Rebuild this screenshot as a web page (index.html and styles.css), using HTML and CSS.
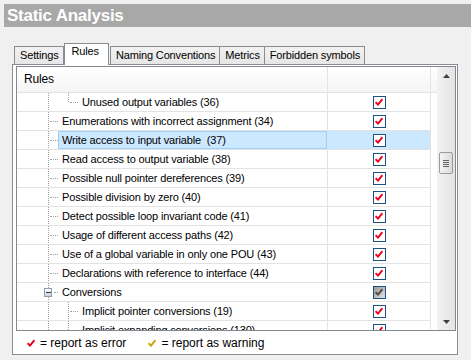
FILE: index.html
```html
<!DOCTYPE html>
<html lang="en">
<head>
    <meta charset="UTF-8">
    <title>Static Analysis</title>
    <link rel="stylesheet" href="styles.css">
</head>
<body>
    <svg class="defs" width="0" height="0">
        <symbol id="tick" viewBox="0 0 8 8">
            <path d="M0.6 4.2 L3 6.6 L7.4 1.2" fill="none" stroke-width="1.9" stroke-linejoin="miter" stroke-linecap="butt"/>
        </symbol>
    </svg>

    <div class="title">Static Analysis</div>

    <div class="tabs">
        <div class="tab">Settings</div>
        <div class="tab active">Rules</div>
        <div class="tab">Naming Conventions</div>
        <div class="tab">Metrics</div>
        <div class="tab">Forbidden symbols</div>
    </div>

    <div class="panel">
        <div class="grid">
            <div class="view">
                <div class="head">
                    <div class="head-name">Rules</div>
                    <div class="head-check"></div>
                </div>
                <div class="rows">
                    <div class="row">
                        <div class="name"><span class="g"></span><span class="g l"></span><span class="label">Unused output variables (36)</span></div>
                        <div class="check"><span class="cb"><svg><use href="#tick"/></svg></span></div>
                    </div>
                    <div class="row">
                        <div class="name"><span class="g t"></span><span class="label">Enumerations with incorrect assignment (34)</span></div>
                        <div class="check"><span class="cb"><svg><use href="#tick"/></svg></span></div>
                    </div>
                    <div class="row selected">
                        <div class="name"><span class="g t"></span><span class="label">Write access to input variable&nbsp; (37)</span></div>
                        <div class="check"><span class="cb"><svg><use href="#tick"/></svg></span></div>
                    </div>
                    <div class="row">
                        <div class="name"><span class="g t"></span><span class="label">Read access to output variable (38)</span></div>
                        <div class="check"><span class="cb"><svg><use href="#tick"/></svg></span></div>
                    </div>
                    <div class="row">
                        <div class="name"><span class="g t"></span><span class="label">Possible null pointer dereferences (39)</span></div>
                        <div class="check"><span class="cb"><svg><use href="#tick"/></svg></span></div>
                    </div>
                    <div class="row">
                        <div class="name"><span class="g t"></span><span class="label">Possible division by zero (40)</span></div>
                        <div class="check"><span class="cb"><svg><use href="#tick"/></svg></span></div>
                    </div>
                    <div class="row">
                        <div class="name"><span class="g t"></span><span class="label">Detect possible loop invariant code (41)</span></div>
                        <div class="check"><span class="cb"><svg><use href="#tick"/></svg></span></div>
                    </div>
                    <div class="row">
                        <div class="name"><span class="g t"></span><span class="label">Usage of different access paths (42)</span></div>
                        <div class="check"><span class="cb"><svg><use href="#tick"/></svg></span></div>
                    </div>
                    <div class="row">
                        <div class="name"><span class="g t"></span><span class="label">Use of a global variable in only one POU (43)</span></div>
                        <div class="check"><span class="cb"><svg><use href="#tick"/></svg></span></div>
                    </div>
                    <div class="row">
                        <div class="name"><span class="g t"></span><span class="label">Declarations with reference to interface (44)</span></div>
                        <div class="check"><span class="cb"><svg><use href="#tick"/></svg></span></div>
                    </div>
                    <div class="row">
                        <div class="name"><span class="g box"><span class="minus"></span></span><span class="label">Conversions</span></div>
                        <div class="check"><span class="cb mixed"><svg><use href="#tick"/></svg></span></div>
                    </div>
                    <div class="row">
                        <div class="name"><span class="g"></span><span class="g t"></span><span class="label">Implicit pointer conversions (19)</span></div>
                        <div class="check"><span class="cb"><svg><use href="#tick"/></svg></span></div>
                    </div>
                    <div class="row">
                        <div class="name"><span class="g"></span><span class="g t"></span><span class="label">Implicit expanding conversions (130)</span></div>
                        <div class="check"><span class="cb"><svg><use href="#tick"/></svg></span></div>
                    </div>
                </div>
            </div>
            <div class="scrollbar">
                <div class="sb-btn"><svg width="7" height="4"><polygon points="0,4 3.5,0 7,4"/></svg></div>
                <div class="sb-track"><div class="thumb"><i></i><i></i><i></i><i></i></div></div>
                <div class="sb-btn"><svg width="7" height="4"><polygon points="0,0 7,0 3.5,4"/></svg></div>
            </div>
        </div>
        <div class="legend">
            <span class="mark error"><svg><use href="#tick"/></svg></span>
            <span>= report as error</span>
            <span class="mark warning"><svg><use href="#tick"/></svg></span>
            <span>= report as warning</span>
        </div>
    </div>
</body>
</html>
```

FILE: styles.css
```css
* {
    margin: 0;
    padding: 0;
    box-sizing: border-box;
}

body {
    width: 471px;
    height: 360px;
    overflow: hidden;
    background: #f0f0f0;
    font-family: "Liberation Sans", Arial, sans-serif;
    font-size: 11px;
    letter-spacing: -0.15px;
    color: #000;
}

.defs {
    display: block;
    width: 0;
    height: 0;
}

.title {
    margin: 4px 0 0 4px;
    height: 23px;
    padding-left: 3px;
    background: #a8a8a8;
    color: #fff;
    font-size: 17px;
    font-weight: bold;
    letter-spacing: -0.25px;
    line-height: 24px;
}

/* tab strip, its bottom border is the panel's top edge */
.tabs {
    display: flex;
    align-items: flex-end;
    margin: 16px 0 0 12px;
    width: 446px;
    height: 22px;
    padding-left: 2px;
    border-bottom: 1px solid #898c95;
}

.tab {
    height: 18px;
    padding: 0 4px 0 5px;
    border: 1px solid #898c95;
    border-bottom: none;
    background: linear-gradient(#f2f2f2, #e6e6e6);
    line-height: 16px;
    margin-right: -1px;
}

.tab.active {
    height: 22px;
    margin: 0 1px -1px 1px;
    padding: 0 9px 0 7px;
    background: #fff;
    line-height: 14px;
}

.panel {
    width: 446px;
    margin-left: 12px;
    height: 290px;
    padding: 1px 1px 0 3px;
    background: #fff;
    border: 1px solid #898c95;
    border-top: none;
}

.grid {
    display: flex;
    width: 440px;
    height: 265px;
    border: 1px solid #828790;
}

.view {
    width: 420px;
    background: #fff;
}

.head {
    display: flex;
    height: 26px;
    border-bottom: 1px solid #e3e3e3;
    background: linear-gradient(#fff, #f4f5f6);
}

.head-name {
    width: 311px;
    padding-left: 7px;
    border-right: 1px solid #e5e5e5;
    font-size: 12px;
    line-height: 25px;
}

.head-check {
    width: 103px;
    border-right: 1px solid #e5e5e5;
}

.rows {
    height: 237px;
    overflow: hidden;
}

.row {
    display: flex;
    width: 414px;
    height: 19px;
    border-bottom: 1px solid #e3e3e3;
}

.name {
    display: flex;
    width: 311px;
    height: 18px;
    padding-left: 21px;
    border-right: 1px solid #e3e3e3;
}

.check {
    display: flex;
    align-items: center;
    justify-content: center;
    width: 103px;
    border-right: 1px solid #e3e3e3;
}

.label {
    padding-left: 3px;
    border: 1px solid transparent;
    line-height: 16px;
    white-space: nowrap;
}

.selected .label {
    flex: 1;
    background: #cce8ff;
    border-color: #99d1ff;
}

.selected .check {
    background: #cce8ff;
}

/* tree guide lines */
.g {
    display: flex;
    align-items: center;
    flex: none;
    width: 20px;
    height: 18px;
    background-image: repeating-linear-gradient(to bottom, #a0a0a0 0 1px, transparent 1px 2px);
    background-size: 1px 100%;
    background-position: 10px 0;
    background-repeat: no-repeat;
}

.g.l {
    background-size: 1px 50%;
}

.g.t::after,
.g.l::after,
.g.box::after {
    content: "";
    width: 8px;
    margin-left: 12px;
    border-top: 1px dotted #a0a0a0;
}

.g.box::after {
    width: 4px;
    margin-left: 2px;
}

.minus {
    display: flex;
    align-items: center;
    justify-content: center;
    width: 9px;
    height: 9px;
    margin-left: 6px;
    border: 1px solid #8f9fb0;
    background: linear-gradient(#fdfdfd, #c9d2dc);
}

.minus::after {
    content: "";
    width: 5px;
    height: 1px;
    background: #3a3a3a;
}

.cb {
    display: flex;
    align-items: center;
    justify-content: center;
    width: 13px;
    height: 13px;
    border: 1px solid #1c5180;
    background: #fff;
}

.cb svg {
    width: 8px;
    height: 8px;
    stroke: #f0001c;
}

.cb.mixed {
    background: linear-gradient(135deg, #9a9a9a, #e2e2e2);
}

.cb.mixed svg {
    stroke: #4a4a4a;
}

/* scrollbar */
.scrollbar {
    display: flex;
    flex-direction: column;
    width: 18px;
    background: linear-gradient(to right, #f2f2f2, #e4e4e4);
}

.sb-btn {
    display: flex;
    align-items: center;
    justify-content: center;
    height: 17px;
}

.sb-btn svg {
    fill: #404040;
}

.sb-track {
    flex: 1;
    padding: 68px 0 0 2px;
}

.thumb {
    display: flex;
    flex-direction: column;
    align-items: center;
    justify-content: center;
    gap: 1px;
    width: 14px;
    height: 22px;
    border: 1px solid #9a9a9a;
    border-radius: 2px;
    background: linear-gradient(to right, #f4f4f4, #dadada);
}

.thumb i {
    width: 6px;
    height: 1px;
    background: #666;
}

/* legend under the grid */
.legend {
    display: flex;
    align-items: center;
    height: 23px;
    padding-left: 11px;
    font-size: 12px;
    letter-spacing: 0;
}

.mark {
    display: flex;
    margin-right: 5px;
}

.mark svg {
    width: 8px;
    height: 8px;
}

.mark.error svg {
    stroke: #e0001c;
}

.mark.warning {
    margin-left: 22px;
}

.mark.warning svg {
    stroke: #d0a000;
}
```
